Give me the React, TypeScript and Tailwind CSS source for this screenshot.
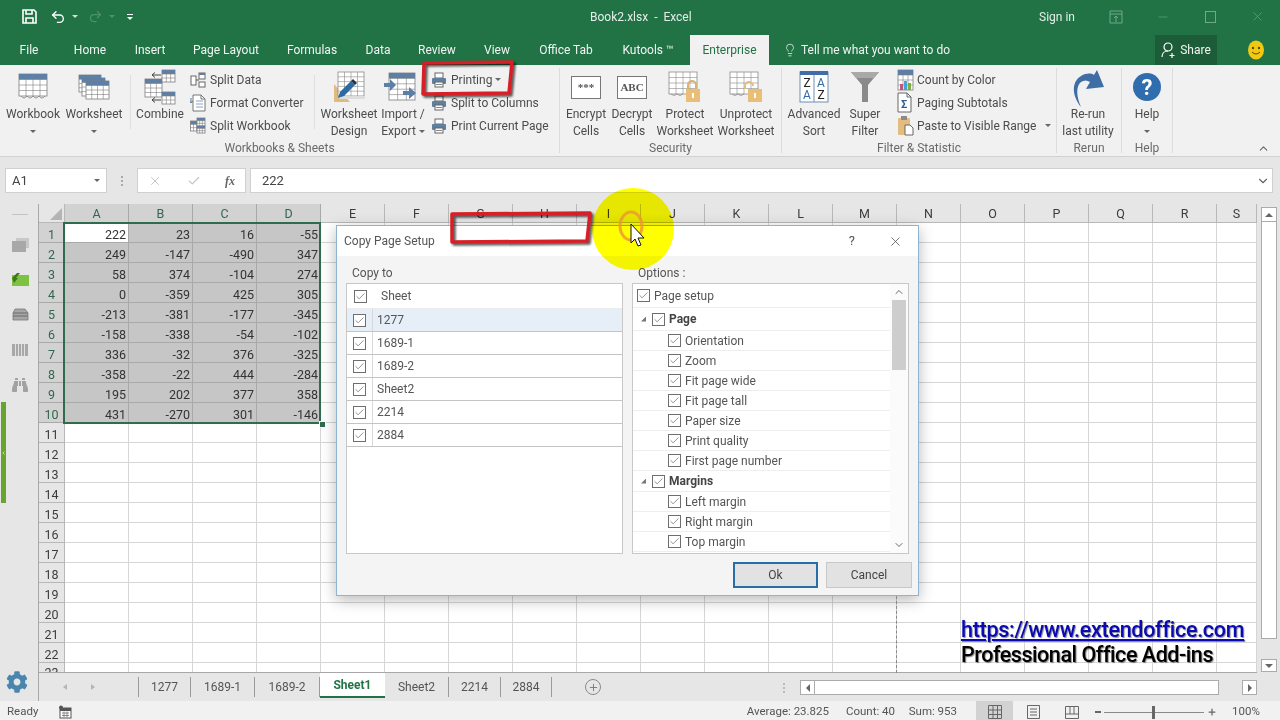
import { Lightbulb, Redo2, Undo2, Check, X, Minus, Plus, ChevronUp, ChevronDown, ChevronLeft } from 'lucide-react'
import { FaCog, FaBinoculars } from 'react-icons/fa'
import type { ReactNode } from 'react'

const BLUE = '#5c7fa8'
const LINE = '#7d7d7d'

// small table drawing used by most of the ribbon icons
function Tbl({ x, y, w, h, c, r, head = true, stroke = LINE }: { x: number; y: number; w: number; h: number; c: number; r: number; head?: boolean; stroke?: string }) {
  const cols = Array.from({ length: c - 1 }, (_, i) => x + ((i + 1) * w) / c)
  const rows = Array.from({ length: r - 1 }, (_, i) => y + ((i + 1) * h) / r)
  return (
    <g>
      <rect x={x} y={y} width={w} height={h} fill="#fff" stroke={stroke} strokeWidth="0.8" />
      {head && <rect x={x} y={y} width={w} height={h / r} fill={BLUE} />}
      {cols.map((v) => (
        <line key={v} x1={v} x2={v} y1={y} y2={y + h} stroke={stroke} strokeWidth="0.6" />
      ))}
      {rows.map((v) => (
        <line key={v} x1={x} x2={x + w} y1={v} y2={v} stroke={stroke} strokeWidth="0.6" />
      ))}
    </g>
  )
}

function Svg({ w, h, children }: { w: number; h: number; children: ReactNode }) {
  return (
    <svg width={w} height={h} viewBox={`0 0 ${w} ${h}`} className="shrink-0">
      {children}
    </svg>
  )
}

function WorkbookIcon() {
  return (
    <Svg w={32} h={28}>
      <Tbl x={2} y={1} w={28} h={22} c={4} r={4} />
      <path d="M4 23q3 4 6 0q3 4 6 0q3 4 6 0q3 4 6 0" fill="none" stroke={LINE} strokeWidth="0.8" />
    </Svg>
  )
}

function WorksheetIcon() {
  return (
    <Svg w={32} h={28}>
      <Tbl x={1} y={2} w={22} h={17} c={4} r={4} />
      <Tbl x={4} y={5} w={23} h={18} c={4} r={4} />
      <Tbl x={8} y={8} w={23} h={18} c={4} r={4} />
    </Svg>
  )
}

function CombineIcon() {
  return (
    <Svg w={32} h={36}>
      <Tbl x={1} y={10} w={17} h={18} c={3} r={4} />
      <Tbl x={18} y={1} w={13} h={12} c={3} r={3} />
      <Tbl x={18} y={23} w={13} h={12} c={3} r={3} />
      <path d="M17 6h-9M11 3.500l-3 2.500l3 2.500M17 31h-9M11 28.500l-3 2.500l3 2.500" fill="none" stroke="#444" strokeWidth="1" />
    </Svg>
  )
}

function DesignIcon() {
  return (
    <Svg w={32} h={32}>
      <path d="M1 13l16 18H1z" fill="#e0bb7f" />
      <Tbl x={5} y={1} w={26} h={24} c={4} r={5} head={false} stroke="#8a8a8a" />
      <rect x={6} y={25} width={26} height={3} fill="#ddd" />
      <path d="M5 27l2-6L18 10l4 4L11 25z" fill="#2d6aa0" />
      <path d="M18 10l2-2l4 4l-2 2z" fill="#234" />
    </Svg>
  )
}

function ImportIcon() {
  return (
    <Svg w={38} h={30}>
      <Tbl x={5} y={1} w={26} h={27} c={3} r={5} />
      <path d="M0 11h6V7l6 6l-6 6v-4H0zM19 19h6v-4l7 6l-7 6v-4h-6z" fill={BLUE} />
    </Svg>
  )
}

function PrinterIcon() {
  return (
    <Svg w={16} h={16}>
      <rect x={4} y={1} width={8} height={5} fill="#fff" stroke="#666" />
      <rect x={1} y={6} width={14} height={6} rx={1} fill="#5f7f9f" />
      <rect x={4} y={10} width={8} height={5} fill="#fff" stroke="#666" />
      <line x1={5} x2={11} y1={12.5} y2={12.5} stroke="#888" />
    </Svg>
  )
}

function SplitDataIcon() {
  return (
    <Svg w={16} h={16}>
      <rect x={1} y={4} width={5} height={9} fill="#fff" stroke="#666" />
      <rect x={9} y={1} width={6} height={6} fill="#fff" stroke="#666" />
      <rect x={9} y={10} width={6} height={5} fill="#fff" stroke="#666" />
      <rect x={9} y={1} width={6} height={2} fill={BLUE} />
      <path d="M6 8h3" stroke="#555" />
    </Svg>
  )
}

function ConverterIcon() {
  return (
    <Svg w={17} h={18}>
      <path d="M3 1h8l4 4v12H3z" fill="#fff" stroke="#777" />
      <path d="M11 1v4h4" fill="none" stroke="#777" />
      <path d="M6 7h7M6 10h7M6 13h7" stroke="#8aa3bd" />
      <path d="M1 4v5M0 7l1 2l2-2" fill="none" stroke="#5c7fa8" />
    </Svg>
  )
}

function SplitBookIcon() {
  return (
    <Svg w={16} h={17}>
      <Tbl x={0.5} y={4} w={9} h={10} c={3} r={3} />
      <Tbl x={7} y={1} w={8} h={8} c={3} r={3} />
      <Tbl x={7} y={9} w={8} h={7} c={3} r={3} />
    </Svg>
  )
}

function LockGrid({ open = false }: { open?: boolean }) {
  return (
    <Svg w={36} h={32}>
      <Tbl x={2} y={1} w={28} h={22} c={4} r={4} head={false} stroke="#8a8a8a" />
      <path d="M4 23q3 3 6 0q3 3 6 0" fill="none" stroke="#8a8a8a" strokeWidth="0.8" />
      {open ? (
        <path d="M17 18v-3a4 4 0 0 1 8 0" fill="none" stroke="#e3bd7b" strokeWidth="2" />
      ) : (
        <path d="M21 18v-4a4 4 0 0 1 8 0v4" fill="none" stroke="#d8b26f" strokeWidth="2" />
      )}
      <rect x={open ? 20 : 19} y={18} width={14} height={13} fill="#e9bf78" />
      <rect x={open ? 26 : 25} y={22} width={2} height={5} fill="#fff" />
    </Svg>
  )
}

function SortIcon() {
  return (
    <Svg w={30} h={34}>
      <rect x={1} y={2} width={28} height={30} fill="#fff" stroke="#6f8fb5" />
      <rect x={1} y={1} width={28} height={4} fill="#3f6ea5" />
      <line x1={15} x2={15} y1={5} y2={32} stroke="#6f8fb5" />
      <text x={8} y={17} textAnchor="middle" fontSize="12" fontFamily="Roboto" fill="#222">Z</text>
      <text x={8} y={29} textAnchor="middle" fontSize="12" fontFamily="Roboto" fill="#2f6aa8">A</text>
      <text x={22} y={17} textAnchor="middle" fontSize="12" fontFamily="Roboto" fill="#2f6aa8">A</text>
      <text x={22} y={29} textAnchor="middle" fontSize="12" fontFamily="Roboto" fill="#222">Z</text>
    </Svg>
  )
}

function FunnelIcon() {
  return (
    <Svg w={30} h={32}>
      <path d="M1 1h28L18 14v17h-6V14z" fill="#8a8a8a" />
      <path d="M1 1h28l-5 6H6z" fill="#a9a9a9" />
    </Svg>
  )
}

function CountIcon() {
  return (
    <Svg w={17} h={22}>
      <Tbl x={1} y={1} w={15} h={20} c={3} r={4} />
      <rect x={3} y={15} width={3} height={6} fill="#c2567a" />
      <rect x={7} y={12} width={3} height={9} fill="#4aa3d8" />
      <rect x={11} y={14} width={3} height={7} fill="#78b13f" />
    </Svg>
  )
}

function SigmaIcon() {
  return (
    <Svg w={15} h={21}>
      <path d="M1 1h9l4 4v15H1z" fill="#fff" stroke="#666" />
      <path d="M10 1v4h4" fill="none" stroke="#666" />
      <text x={7} y={16} textAnchor="middle" fontSize="11" fontWeight="700" fontFamily="Roboto" fill="#2f5f93">Σ</text>
    </Svg>
  )
}

function PasteIcon() {
  return (
    <Svg w={17} h={21}>
      <rect x={1} y={3} width={12} height={17} rx={1} fill="#e3bd80" />
      <rect x={4} y={1} width={6} height={4} fill="#8b8b8b" />
      <path d="M8 10h5l3 3v7H8z" fill="#fff" stroke="#666" />
    </Svg>
  )
}

function RerunIcon() {
  return (
    <Svg w={34} h={42}>
      <path d="M10 41C1 30 0 16 10 10c5-3 10-3 13-1l3-5l7 17l-18 2l4-7c-3-2-6-2-9 0c-5 4-5 14 0 25z" fill="#3f6ea5" />
    </Svg>
  )
}

function Caret({ color = '#666' }: { color?: string }) {
  return <span className="inline-block w-0 h-0 border-x-[3px] border-x-transparent border-t-[3px]" style={{ borderTopColor: color }} />
}

function LargeBtn({ icon, lines, w, caret, inlineCaret }: { icon: ReactNode; lines: string[]; w: string; caret?: boolean; inlineCaret?: boolean }) {
  return (
    <div className={`${w} shrink-0 flex flex-col items-center text-center leading-[17px] whitespace-nowrap`}>
      <div className="h-[38px] flex items-center justify-center">{icon}</div>
      {lines.map((l, i) => (
        <span key={l} className="flex items-center gap-[3px]">
          {l}
          {inlineCaret && i === lines.length - 1 && <Caret />}
        </span>
      ))}
      {caret && (
        <span className="h-[17px] flex items-center">
          <Caret />
        </span>
      )}
    </div>
  )
}

function SmallRow({ icon, label, after }: { icon: ReactNode; label: string; after?: ReactNode }) {
  return (
    <div className="h-[23px] flex items-center whitespace-nowrap">
      <span className="w-[20px] shrink-0 flex items-center">{icon}</span>
      {label}
      {after}
    </div>
  )
}

function Group({ w, label, children }: { w: string; label: string; children: ReactNode }) {
  return (
    <div className={`${w} shrink-0 flex flex-col border-r border-[#dcdcdc] my-[3px]`}>
      <div className="h-[74px] shrink-0 flex items-start">{children}</div>
      <div className="text-center text-[#6a6a6a] leading-[12px]">{label}</div>
    </div>
  )
}

function Divider() {
  return <div className="w-px h-[54px] mt-[7px] bg-[#dedede] shrink-0" />
}

function Ribbon() {
  return (
    <div className="h-[92px] bg-[#f1f1f1] border-b border-[#d2d2d2] flex text-[12px] text-[#4c4c4c] shrink-0">
      <Group w="w-[560px]" label="Workbooks & Sheets">
        <div className="w-[3px]" />
        <LargeBtn w="w-[60px]" icon={<WorkbookIcon />} lines={['Workbook']} caret />
        <LargeBtn w="w-[62px]" icon={<WorksheetIcon />} lines={['Worksheet']} caret />
        <div className="w-[5px]" />
        <Divider />
        <div className="w-[2px]" />
        <LargeBtn w="w-[54px]" icon={<CombineIcon />} lines={['Combine']} />
        <div className="w-[3px]" />
        <div className="w-[124px] shrink-0">
          <SmallRow icon={<SplitDataIcon />} label="Split Data" />
          <SmallRow icon={<ConverterIcon />} label="Format Converter" />
          <SmallRow icon={<SplitBookIcon />} label="Split Workbook" />
        </div>
        <Divider />
        <div className="w-[4px]" />
        <LargeBtn w="w-[60px]" icon={<DesignIcon />} lines={['Worksheet', 'Design']} />
        <LargeBtn w="w-[48px]" icon={<ImportIcon />} lines={['Import /', 'Export']} inlineCaret />
        <div className="w-[4px]" />
        <div className="w-[128px] shrink-0">
          <SmallRow icon={<PrinterIcon />} label="Printing" after={<span className="ml-[3px] flex"><Caret /></span>} />
          <SmallRow icon={<PrinterIcon />} label="Split to Columns" />
          <SmallRow icon={<PrinterIcon />} label="Print Current Page" />
        </div>
      </Group>
      <Group w="w-[222px]" label="Security">
        <div className="w-[3px]" />
        <LargeBtn
          w="w-[46px]"
          icon={<div className="w-[30px] h-[23px] border border-[#777] bg-white flex items-center justify-center text-[11px] font-bold text-[#555] font-['Liberation_Serif',serif]">***</div>}
          lines={['Encrypt', 'Cells']}
        />
        <LargeBtn
          w="w-[46px]"
          icon={<div className="w-[30px] h-[23px] border border-[#777] bg-white flex items-center justify-center text-[11px] font-bold text-[#555] font-['Liberation_Serif',serif]">ABC</div>}
          lines={['Decrypt', 'Cells']}
        />
        <LargeBtn w="w-[60px]" icon={<LockGrid />} lines={['Protect', 'Worksheet']} />
        <LargeBtn w="w-[62px]" icon={<LockGrid open />} lines={['Unprotect', 'Worksheet']} />
      </Group>
      <Group w="w-[275px]" label="Filter & Statistic">
        <div className="w-[4px]" />
        <LargeBtn w="w-[56px]" icon={<SortIcon />} lines={['Advanced', 'Sort']} />
        <LargeBtn w="w-[46px]" icon={<FunnelIcon />} lines={['Super', 'Filter']} />
        <div className="w-[9px]" />
        <div className="w-[159px] shrink-0">
          <SmallRow icon={<CountIcon />} label="Count by Color" />
          <SmallRow icon={<SigmaIcon />} label="Paging Subtotals" />
          <SmallRow icon={<PasteIcon />} label="Paste to Visible Range" after={<span className="ml-[9px] flex"><Caret /></span>} />
        </div>
      </Group>
      <Group w="w-[65px]" label="Rerun">
        <LargeBtn w="w-[62px]" icon={<RerunIcon />} lines={['Re-run', 'last utility']} />
      </Group>
      <Group w="w-[51px]" label="Help">
        <LargeBtn
          w="w-[50px]"
          icon={<div className="w-[28px] h-[28px] rounded-full bg-[#2f6dae] text-white text-[22px] font-bold flex items-center justify-center">?</div>}
          lines={['Help']}
          caret
        />
      </Group>
      <div className="flex-1 flex items-end justify-end pr-[10px] pb-[1px]">
        <ChevronUp size={13} strokeWidth={2} className="text-[#666]" />
      </div>
    </div>
  )
}

const TABS = [
  { label: 'File', w: 'w-[58px]' },
  { label: 'Home', w: 'w-[64px]' },
  { label: 'Insert', w: 'w-[56px]' },
  { label: 'Page Layout', w: 'w-[96px]' },
  { label: 'Formulas', w: 'w-[76px]' },
  { label: 'Data', w: 'w-[56px]' },
  { label: 'Review', w: 'w-[62px]' },
  { label: 'View', w: 'w-[58px]' },
  { label: 'Office Tab', w: 'w-[80px]' },
  { label: 'Kutools ™', w: 'w-[84px]' },
]

function TitleBar() {
  return (
    <div className="h-[33px] bg-[#217346] flex items-center text-[12px] text-[#e4eee9] shrink-0">
      <div className="w-[590px] shrink-0 flex items-center pl-[22px]">
        <svg width="15" height="15" viewBox="0 0 15 15" fill="none" stroke="#fff" strokeWidth="1.6">
          <path d="M1 1h11l2 2v11H1z" />
          <path d="M4 1v4h6V1M4 14V9h7v5" />
        </svg>
        <Undo2 size={16} strokeWidth={2} className="text-white ml-[13px]" />
        <span className="ml-[6px] flex"><Caret color="#cfe0d6" /></span>
        <Redo2 size={15} strokeWidth={2} className="text-[#4f9070] ml-[10px]" />
        <span className="ml-[6px] flex"><Caret color="#4f9070" /></span>
        <span className="ml-[12px] flex flex-col items-center gap-[2px]">
          <span className="w-[6px] h-px bg-white" />
          <Caret color="#fff" />
        </span>
      </div>
      <div className="w-[449px] shrink-0">Book2.xlsx&nbsp; -&nbsp; Excel</div>
      <div className="w-[70px] shrink-0">Sign in</div>
      <svg width="14" height="14" viewBox="0 0 14 14" fill="none" stroke="#6fa88a" className="shrink-0">
        <path d="M1 1h12v12H1zM1 4h12M7 12V6M5 8l2-2l2 2" />
      </svg>
      <Minus size={14} className="text-[#6fa88a] ml-[33px]" strokeWidth={1} />
      <span className="w-[11px] h-[12px] border border-[#6fa88a] ml-[35px]" />
      <X size={15} className="text-[#6fa88a] ml-[34px]" strokeWidth={1} />
    </div>
  )
}

function TabBar() {
  return (
    <div className="h-[32px] bg-[#217346] flex items-end text-[12px] text-[#f0f5f2] shrink-0">
      {TABS.map((t) => (
        <div key={t.label} className={`${t.w} h-[30px] flex items-center justify-center shrink-0 whitespace-nowrap`}>
          {t.label}
        </div>
      ))}
      <div className="w-[79px] h-[30px] bg-[#f1f1f1] text-[#217346] flex items-center justify-center shrink-0">Enterprise</div>
      <div className="w-[386px] h-[30px] flex items-center shrink-0 pl-[14px]">
        <Lightbulb size={14} strokeWidth={1.3} className="shrink-0 text-[#f0f5f2]" />
        <span className="ml-[4px]">Tell me what you want to do</span>
      </div>
      <div className="w-[62px] h-[30px] bg-[#1c5c38] flex items-center justify-center gap-[3px] shrink-0">
        <svg width="16" height="18" viewBox="0 0 16 18" fill="none" stroke="#fff" strokeWidth="1.2">
          <circle cx="7" cy="6" r="4" />
          <path d="M1 16c0-4 3-6 6-6M11 12v5M8.5 14.5h5" />
        </svg>
        Share
      </div>
      <div className="flex-1 h-[30px] flex items-center justify-end pr-[15px]">
        <svg width="18" height="20" viewBox="0 0 18 20">
          <ellipse cx="9" cy="10" rx="8" ry="9.5" fill="#f2c811" />
          <circle cx="6" cy="8" r="1.2" fill="#5a4a00" />
          <circle cx="12" cy="8" r="1.2" fill="#5a4a00" />
          <path d="M5 12q4 4 8 0" stroke="#5a4a00" fill="none" />
        </svg>
      </div>
    </div>
  )
}

function FormulaBar() {
  return (
    <div className="h-[47px] bg-[#e6e6e6] flex items-start pt-[11px] text-[13px] text-[#444] shrink-0">
      <div className="w-[102px] h-[25px] ml-[5px] bg-white border border-[#d0d0d0] flex items-center justify-between px-[6px] shrink-0">
        A1
        <Caret />
      </div>
      <div className="w-[30px] h-[25px] shrink-0 flex flex-col items-center justify-center gap-[2px]">
        <span className="w-[2px] h-[2px] bg-[#aaa]" />
        <span className="w-[2px] h-[2px] bg-[#aaa]" />
        <span className="w-[2px] h-[2px] bg-[#aaa]" />
      </div>
      <div className="w-[109px] h-[25px] bg-white border border-[#d0d0d0] flex items-center justify-between px-[10px] shrink-0">
        <X size={14} strokeWidth={1.5} className="text-[#bdbdbd]" />
        <Check size={14} strokeWidth={2} className="text-[#c4c4c4]" />
        <span className="font-['Liberation_Serif',serif] italic font-bold text-[12px] text-[#666]">fx</span>
      </div>
      <div className="flex-1 h-[25px] ml-[4px] mr-[7px] bg-white border border-[#d0d0d0] flex items-center justify-between pl-[11px] pr-[2px]">
        222
        <ChevronDown size={14} strokeWidth={2} className="text-[#666]" />
      </div>
    </div>
  )
}

const COLS = ['A', 'B', 'C', 'D', 'E', 'F', 'G', 'H', 'I', 'J', 'K', 'L', 'M', 'N', 'O', 'P', 'Q', 'R', 'S']
const DATA = [
  [222, 23, 16, -55],
  [249, -147, -490, 347],
  [58, 374, -104, 274],
  [0, -359, 425, 305],
  [-213, -381, -177, -345],
  [-158, -338, -54, -102],
  [336, -32, 376, -325],
  [-358, -22, 444, -284],
  [195, 202, 377, 358],
  [431, -270, 301, -146],
]
const ROWS = Array.from({ length: 23 }, (_, i) => i + 1)

function rowHeadClass(r: number) {
  if (r === 23) return 'bg-[#e6e6e6] border-r border-[#b8b8b8] flex items-start justify-center pt-[3px] overflow-hidden'
  if (r <= 10) return 'bg-[#d2d2d2] border-r border-b border-[#a9a9a9] text-[#33664d] flex items-center justify-center pt-[5px]'
  return 'bg-[#e6e6e6] border-r border-b border-[#b8b8b8] flex items-center justify-center pt-[5px]'
}

function Sheet() {
  return (
    <div className="relative h-[469px] overflow-hidden border-b border-[#a8a8a8] grid grid-cols-[26px_repeat(18,64px)_40px] grid-rows-[19px_repeat(22,20px)_10px] text-[12.5px] leading-[14px] text-[#3c3c3c] bg-white">
      <div className="bg-[#e6e6e6] border-r border-b border-[#b8b8b8] flex items-end justify-end p-[2px]">
        <span className="w-0 h-0 border-l-[12px] border-l-transparent border-b-[12px] border-b-[#b4b4b4]" />
      </div>
      {COLS.map((c, i) => (
        <div
          key={c}
          className={
            i < 4
              ? 'bg-[#d2d2d2] border-r border-b border-[#a9a9a9] text-[#33664d] flex items-center justify-center pt-[2px]'
              : 'bg-[#e6e6e6] border-r border-b border-[#b8b8b8] flex items-center justify-center pt-[2px]'
          }
        >
          {c}
        </div>
      ))}
      {ROWS.map((r) => (
        <div key={r} className="contents">
          <div className={rowHeadClass(r)}>{r}</div>
          {COLS.map((c, i) => {
            const value = r <= 10 && i < 4 ? DATA[r - 1][i] : null
            const first = r === 1 && i === 0
            return (
              <div
                key={c}
                className={
                  value === null
                    ? 'border-r border-b border-[#d6d6d6]'
                    : first
                      ? 'bg-white border-r border-b border-[#a9a9a9] flex items-center justify-end pr-[2px] pt-[5px] text-[#333]'
                      : 'bg-[#c6c6c6] border-r border-b border-[#a9a9a9] flex items-center justify-end pr-[2px] pt-[5px] text-[#333]'
                }
              >
                {value}
              </div>
            )
          })}
        </div>
      ))}
      {/* active selection outline and fill handle */}
      <div className="absolute left-[24px] top-[18px] w-[258px] h-[202px] border-2 border-[#2f6b4d]" />
      <div className="absolute left-[280px] top-[217px] w-[5px] h-[5px] bg-[#2f6b4d] border border-white box-content" />
    </div>
  )
}

function SideBar() {
  return (
    <div className="w-[39px] shrink-0 bg-[#e6e6e6] border-r border-[#a8a8a8] flex flex-col items-center pl-[2px]">
      <div className="w-[16px] h-px bg-[#c4c4c4] mt-[10px] mb-[12px]" />
      <div className="h-[35px] flex items-center">
        <svg width="17" height="14" viewBox="0 0 17 14">
          <rect x="4" y="0" width="13" height="10" fill="#c8c8c8" />
          <rect x="0" y="3" width="14" height="11" fill="#a8a8a8" />
        </svg>
      </div>
      <div className="h-[35px] flex items-center">
        <svg width="17" height="13" viewBox="0 0 17 13">
          <rect x="0" y="2" width="17" height="11" fill="#7fc241" />
          <path d="M0 5L5 0h3L4 5l2 0l-4 5z" fill="#3d7a1c" />
        </svg>
      </div>
      <div className="h-[35px] flex items-center">
        <svg width="17" height="13" viewBox="0 0 17 13" fill="#a6a6a6" stroke="#7a7a7a" strokeWidth="0.8">
          <path d="M3 1h10l3 4H1zM1 5h15v3H1zM1 8h15v4H1z" />
        </svg>
      </div>
      <div className="h-[35px] flex items-center">
        <svg width="16" height="12" viewBox="0 0 16 12">
          <rect width="16" height="12" fill="#a8a8a8" />
          <path d="M3.5 0v12M6.5 0v12M9.5 0v12M12.5 0v12" stroke="#e0e0e0" />
        </svg>
      </div>
      <div className="h-[35px] flex items-center">
        <FaBinoculars size={16} className="text-[#a2a2a2]" />
      </div>
      <div className="self-start -ml-px w-[5px] h-[101px] bg-[#69a42f] flex items-center">
        <ChevronLeft size={6} strokeWidth={3} className="text-white" />
      </div>
      <div className="mt-auto mb-[8px] -ml-[7px]">
        <FaCog size={22} className="text-[#4a85ad]" />
      </div>
    </div>
  )
}

const SHEET_TABS = [
  { label: '1277', w: 'w-[52px]' },
  { label: '1689-1', w: 'w-[64px]' },
  { label: '1689-2', w: 'w-[65px]' },
]
const SHEET_TABS_AFTER = [
  { label: 'Sheet2', w: 'w-[64px]' },
  { label: '2214', w: 'w-[52px]' },
  { label: '2884', w: 'w-[51px]' },
]

function SheetTab({ label, w }: { label: string; w: string }) {
  return (
    <div className={`${w} h-[20px] mt-[4px] flex items-center justify-center border-r border-[#9a9a9a] shrink-0`}>{label}</div>
  )
}

function SheetTabs() {
  return (
    <div className="h-[28px] bg-[#e6e6e6] flex items-start text-[12px] text-[#555] shrink-0">
      <div className="w-[100px] h-[20px] mt-[4px] flex items-center justify-end pr-[6px] gap-[24px] border-r border-[#9a9a9a] shrink-0">
        <span className="w-0 h-0 border-y-[3px] border-y-transparent border-r-[4px] border-r-[#b5b5b5]" />
        <span className="w-0 h-0 border-y-[3px] border-y-transparent border-l-[4px] border-l-[#b5b5b5] mr-[37px]" />
      </div>
      {SHEET_TABS.map((t) => (
        <SheetTab key={t.label} {...t} />
      ))}
      <div className="w-[65px] h-[25px] bg-white border-b-2 border-[#217346] flex items-center justify-center font-bold text-[#217346] shrink-0">Sheet1</div>
      {SHEET_TABS_AFTER.map((t) => (
        <SheetTab key={t.label} {...t} />
      ))}
      <div className="w-[16px] h-[16px] ml-[33px] mt-[6px] rounded-full border border-[#8a8a8a] flex items-center justify-center shrink-0">
        <Plus size={11} strokeWidth={2} className="text-[#777]" />
      </div>
      <div className="w-[2px] h-[15px] ml-[182px] mt-[7px] shrink-0 flex flex-col items-center justify-center gap-[2px]">
        <span className="w-[2px] h-[2px] bg-[#bbb]" />
        <span className="w-[2px] h-[2px] bg-[#bbb]" />
        <span className="w-[2px] h-[2px] bg-[#bbb]" />
      </div>
      <div className="w-[457px] h-[15px] ml-[15px] mt-[7px] flex shrink-0">
        <div className="w-[15px] bg-white border border-[#ababab] flex items-center justify-center">
          <span className="w-0 h-0 border-y-[4px] border-y-transparent border-r-[4px] border-r-[#666]" />
        </div>
        <div className="w-[404px] bg-white border-y border-r border-[#ababab]" />
        <div className="flex-1" />
        <div className="w-[15px] bg-white border border-[#ababab] flex items-center justify-center">
          <span className="w-0 h-0 border-y-[4px] border-y-transparent border-l-[4px] border-l-[#666]" />
        </div>
      </div>
    </div>
  )
}

function VScroll() {
  return (
    <div className="w-[23px] h-[469px] shrink-0 bg-[#e6e6e6] flex flex-col pl-[4px] pr-[3px] pt-[3px] pb-[1px]">
      <div className="h-[15px] bg-white border border-[#ababab] flex items-center justify-center shrink-0">
        <span className="w-0 h-0 border-x-[4px] border-x-transparent border-b-[4px] border-b-[#666]" />
      </div>
      <div className="h-[417px] bg-white border-x border-b border-[#ababab] shrink-0" />
      <div className="flex-1" />
      <div className="h-[13px] bg-white border border-[#ababab] flex items-center justify-center shrink-0">
        <span className="w-0 h-0 border-x-[4px] border-x-transparent border-t-[4px] border-t-[#666]" />
      </div>
    </div>
  )
}

function StatusBar() {
  return (
    <div className="h-[19px] bg-[#f1f1f1] flex items-center pt-[3px] text-[11.5px] text-[#555] shrink-0">
      <div className="w-[58px] pl-[7px] shrink-0">Ready</div>
      <svg width="14" height="14" viewBox="0 0 14 14" className="shrink-0">
        <rect x="2" y="3" width="11" height="10" fill="#fff" stroke="#555" />
        <rect x="2" y="3" width="11" height="3" fill="#555" />
        <circle cx="3" cy="2.5" r="2" fill="#555" />
        <path d="M4 8h7M4 10.5h7M6 6.5v6M9 6.5v6" stroke="#888" />
      </svg>
      <div className="w-[757px] shrink-0 text-right whitespace-nowrap">Average: 23.825</div>
      <div className="w-[66px] shrink-0 text-right whitespace-nowrap">Count: 40</div>
      <div className="w-[62px] shrink-0 text-right whitespace-nowrap">Sum: 953</div>
      <div className="w-[37px] h-[19px] self-start -mt-[3px] ml-[19px] bg-[#d2d2d2] flex items-center justify-center pt-[2px] shrink-0">
        <svg width="14" height="14" viewBox="0 0 14 14" fill="none" stroke="#666">
          <path d="M.5.5h13v13H.5zM.5 5h13M.5 9.5h13M5 .5v13M9.5.5v13" />
        </svg>
      </div>
      <div className="w-[39px] flex justify-center shrink-0 ml-[1px]">
        <svg width="13" height="14" viewBox="0 0 13 14" fill="none" stroke="#666">
          <path d="M.5.5h12v13H.5zM3 4h7M3 7h7M3 10h7" />
        </svg>
      </div>
      <div className="w-[38px] flex justify-center shrink-0">
        <svg width="14" height="13" viewBox="0 0 14 13" fill="none" stroke="#666">
          <path d="M.5.5h13v12H.5zM.5 8h13M5 .5v7.5M9 .5v7.5" />
        </svg>
      </div>
      <span className="ml-[4px] w-[6px] h-[2px] bg-[#666] shrink-0" />
      <div className="relative w-[100px] h-px bg-[#8a8a8a] ml-[3px] shrink-0">
        <span className="absolute left-[48px] -top-[6px] w-[3px] h-[13px] bg-[#666]" />
      </div>
      <Plus size={10} strokeWidth={3} className="text-[#666] ml-[3px] shrink-0" />
      <div className="ml-[15px]">100%</div>
    </div>
  )
}

function Box() {
  return (
    <span className="w-[13px] h-[13px] border border-[#6e6e6e] bg-white flex items-center justify-center shrink-0">
      <Check size={11} strokeWidth={1.4} className="text-[#555]" />
    </span>
  )
}

const LIST = ['1277', '1689-1', '1689-2', 'Sheet2', '2214', '2884']

type TreeRow = { label: string; kind: 'root' | 'group' | 'leaf'; h: string }
const TREE: TreeRow[] = [
  { label: 'Page setup', kind: 'root', h: 'h-[24px]' },
  { label: 'Page', kind: 'group', h: 'h-[23px]' },
  { label: 'Orientation', kind: 'leaf', h: 'h-[20px]' },
  { label: 'Zoom', kind: 'leaf', h: 'h-[20px]' },
  { label: 'Fit page wide', kind: 'leaf', h: 'h-[20px]' },
  { label: 'Fit page tall', kind: 'leaf', h: 'h-[20px]' },
  { label: 'Paper size', kind: 'leaf', h: 'h-[20px]' },
  { label: 'Print quality', kind: 'leaf', h: 'h-[20px]' },
  { label: 'First page number', kind: 'leaf', h: 'h-[20px]' },
  { label: 'Margins', kind: 'group', h: 'h-[21px]' },
  { label: 'Left margin', kind: 'leaf', h: 'h-[20px]' },
  { label: 'Right margin', kind: 'leaf', h: 'h-[20px]' },
  { label: 'Top margin', kind: 'leaf', h: 'h-[20px]' },
]

function Dialog() {
  return (
    <div className="absolute left-[336px] top-[225px] w-[583px] h-[371px] flex flex-col bg-[#f4f4f4] border border-[#8fb4d2] shadow-[0_4px_14px_rgba(0,0,0,0.28)] text-[12px] text-[#555]">
      <div className="h-[30px] bg-white flex items-center pl-[7px] shrink-0">
        Copy Page Setup
        <span className="ml-auto text-[13px]">?</span>
        <X size={15} strokeWidth={1.3} className="ml-[33px] mr-[15px] text-[#555]" />
      </div>
      <div className="h-[27px] flex items-end pb-[1px] shrink-0">
        <span className="w-[301px] pl-[15px]">Copy to</span>
        <span>Options :</span>
      </div>
      <div className="flex pl-[9px] gap-[9px] shrink-0">
        <div className="w-[277px] h-[271px] bg-white border border-[#c8c8c8]">
          <div className="h-[25px] flex items-center border-b border-[#ececec]">
            <span className="w-[26px] flex justify-center"><Box /></span>
            <span className="pl-[8px]">Sheet</span>
          </div>
          {LIST.map((l, i) => (
            <div key={l} className={i === 0 ? 'h-[23px] flex items-center border-b border-[#c4c4c4] bg-[#e6eef8]' : 'h-[23px] flex items-center border-b border-[#c4c4c4]'}>
              <span className="w-[26px] h-full flex items-center justify-center border-r border-[#d8d8d8]"><Box /></span>
              <span className="pl-[4px]">{l}</span>
            </div>
          ))}
        </div>
        <div className="w-[277px] h-[271px] bg-white border border-[#c8c8c8] flex overflow-hidden">
          <div className="flex-1 min-w-0">
            {TREE.map((t) => (
              <div
                key={t.label}
                className={`${t.h} flex items-center border-b border-[#eeeeee] ${t.kind === 'root' ? 'pl-[4px]' : t.kind === 'group' ? 'pl-[8px]' : 'pl-[35px]'}`}
              >
                {t.kind === 'group' && (
                  <span className="w-[5px] h-[5px] mr-[6px] shrink-0 bg-[#777] [clip-path:polygon(100%_0,100%_100%,0_100%)]" />
                )}
                <Box />
                <span className={t.kind === 'group' ? 'ml-[4px] font-bold text-[#444]' : 'ml-[4px]'}>{t.label}</span>
              </div>
            ))}
          </div>
          <div className="w-[18px] shrink-0 flex flex-col items-center py-[2px] bg-[#fbfbfb]">
            <ChevronUp size={12} strokeWidth={2} className="text-[#666] shrink-0" />
            <div className="w-[14px] h-[70px] mt-[2px] bg-[#cdcdcd] shrink-0" />
            <div className="flex-1" />
            <ChevronDown size={12} strokeWidth={2} className="text-[#666] shrink-0" />
          </div>
        </div>
      </div>
      <div className="flex justify-end gap-[8px] pt-[8px] pr-[6px]">
        <button className="w-[85px] h-[26px] bg-[#e2e2e2] border-2 border-[#2a6ea8] text-[#444]">Ok</button>
        <button className="w-[86px] h-[26px] bg-[#e2e2e2] border border-[#c8c8c8] text-[#444]">Cancel</button>
      </div>
    </div>
  )
}

function Annotations() {
  return (
    <svg width="1280" height="720" viewBox="0 0 1280 720" className="absolute left-0 top-0 pointer-events-none">
      <circle cx="633" cy="229" r="41" fill="#ffff00" className="mix-blend-multiply" />
      <ellipse cx="631" cy="226" rx="11" ry="14" fill="none" stroke="#ee9a2e" strokeWidth="3" opacity="0.85" />
      <g fill="none" stroke="#d61f26" strokeWidth="3.5" strokeLinejoin="round" className="drop-shadow-[2px_2px_1px_rgba(0,0,0,0.65)]">
        <path d="M424 63l88-1l-3 31l-86 1z" />
        <path d="M452 214l138-1l-3 28l-135 1z" />
      </g>
      <path d="M631 224v19l4-4l3 7l3-1l-3-7h6z" fill="#fff" stroke="#111" strokeWidth="1" />
    </svg>
  )
}

export default function App() {
  return (
    <div className="relative w-[1280px] h-[720px] overflow-hidden flex flex-col bg-white font-['Roboto',sans-serif]">
      <TitleBar />
      <TabBar />
      <Ribbon />
      <FormulaBar />
      <div className="flex h-[497px] shrink-0">
        <SideBar />
        <div className="flex-1 min-w-0 flex flex-col">
          <div className="flex">
            <div className="w-[1218px] shrink-0">
              <Sheet />
            </div>
            <VScroll />
          </div>
          <SheetTabs />
        </div>
      </div>
      <StatusBar />
      <Dialog />
      {/* page-break line that shows below the dialog */}
      <div className="absolute left-[896px] top-[596px] h-[77px] border-l border-dashed border-[#888]" />
      <div className="absolute left-[961px] top-[617px] font-medium text-[21.5px] leading-[26px] tracking-[-0.27px] text-[#0a0ab4] underline [text-shadow:1px_1px_1px_rgba(0,0,0,0.45)] whitespace-nowrap">
        https://www.extendoffice.com
      </div>
      <div className="absolute left-[961px] top-[642px] font-medium text-[21.5px] leading-[26px] tracking-[-0.45px] text-black [text-shadow:1px_1px_1px_rgba(0,0,0,0.45)] whitespace-nowrap">
        Professional Office Add-ins
      </div>
      <Annotations />
    </div>
  )
}
